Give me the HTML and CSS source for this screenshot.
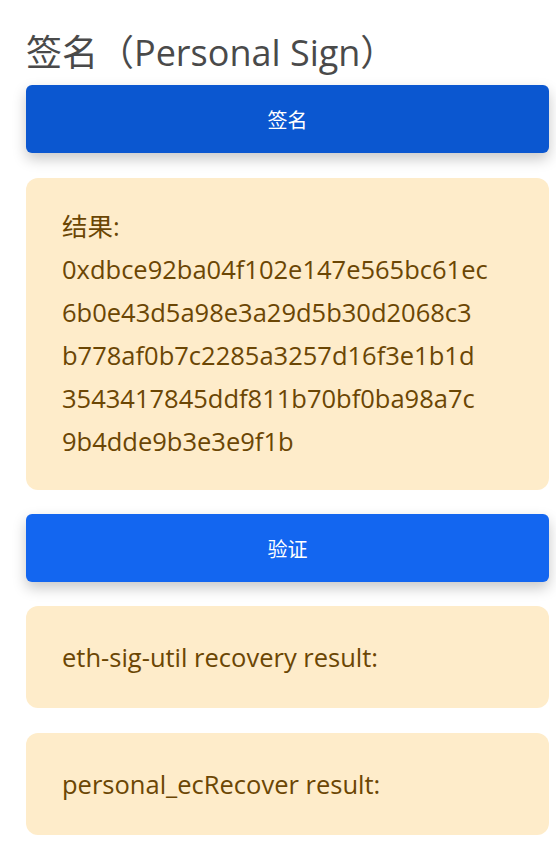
FILE: index.html
```html
<!DOCTYPE html>
<html lang="zh">
<head>
<meta charset="utf-8">
<link rel="stylesheet" href="styles.css">
</head>
<body>
<main class="page">
  <h2 class="title">签名（Personal Sign）</h2>
  <button class="btn btn-sign">签名</button>
  <div class="card card-result">
    <div class="label">结果:</div>
    <div class="hex">0xdbce92ba04f102e147e565bc61ec<br>6b0e43d5a98e3a29d5b30d2068c3<br>b778af0b7c2285a3257d16f3e1b1d<br>3543417845ddf811b70bf0ba98a7c<br>9b4dde9b3e3e9f1b</div>
  </div>
  <button class="btn btn-verify">验证</button>
  <div class="card card-line">eth-sig-util recovery result:</div>
  <div class="card card-line">personal_ecRecover result:</div>
</main>
</body>
</html>
```
FILE: styles.css
```css
html, body {
  margin: 0;
  padding: 0;
  background: #ffffff;
}
.page {
  padding: 30px 7px 0 26px;
  display: flex;
  flex-direction: column;
  font-family: "Open Sans", "Noto Sans CJK SC", sans-serif;
}
.title {
  margin: 0 0 10px 0;
  font-size: 36px;
  font-weight: 400;
  line-height: 45px;
  color: #4a4a4a;
}
.btn {
  height: 68px;
  border: none;
  border-radius: 6px;
  color: #ffffff;
  font-family: "Open Sans", "Noto Sans CJK SC", sans-serif;
  font-size: 20px;
  box-shadow: 0 6px 14px rgba(0, 0, 0, 0.22);
  margin-bottom: 24px;
}
.btn-sign {
  background: #0b57d0;
  margin-bottom: 25px;
}
.btn-verify {
  background: #1366f0;
}
.card {
  background: #feecca;
  border-radius: 12px;
  color: #6b4604;
  font-size: 25.5px;
  line-height: 43px;
  padding: 27px 36px 27px;
  margin-bottom: 24px;
}
.card-line {
  padding: 30px 36px 29px;
  margin-bottom: 25px;
}
.hex {
  word-break: break-all;
}
```
